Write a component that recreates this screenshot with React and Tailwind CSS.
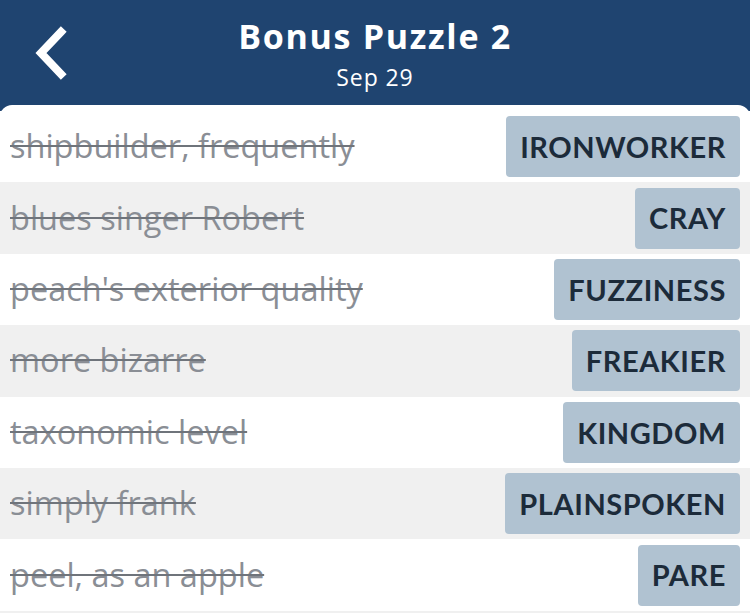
import React from 'react';

const rows = [
  { clue: 'shipbuilder, frequently', answer: 'IRONWORKER' },
  { clue: 'blues singer Robert', answer: 'CRAY' },
  { clue: "peach's exterior quality", answer: 'FUZZINESS' },
  { clue: 'more bizarre', answer: 'FREAKIER' },
  { clue: 'taxonomic level', answer: 'KINGDOM' },
  { clue: 'simply frank', answer: 'PLAINSPOKEN' },
  { clue: 'peel, as an apple', answer: 'PARE' },
];

const BackIcon = () => (
  <svg width="40" height="56" viewBox="0 0 40 56" fill="none">
    <path d="M30 7 L10 28 L30 49" stroke="white" strokeWidth="8" strokeLinecap="square" strokeLinejoin="miter" />
  </svg>
);

const App = () => {
  return (
    <div className="w-[750px] h-[613px] overflow-hidden bg-[#1f4470] font-['Open_Sans',sans-serif]">
      <div className="relative h-[105px] flex flex-col items-center pt-[12px]">
        <button className="absolute left-[31px] top-[25px]">
          <BackIcon />
        </button>
        <h1 className="text-white font-bold text-[34px] leading-[48px] tracking-[0.05em]">Bonus Puzzle 2</h1>
        <p className="text-white text-[23px] leading-[30px] mt-[2px] tracking-[0.04em]">Sep 29</p>
      </div>

      <div className="bg-white rounded-t-[12px] pt-[6px] h-full">
        {rows.map((r, i) => (
          <div
            key={r.clue}
            className={`h-[71.4px] flex items-center justify-between pl-[10px] pr-[10px] ${i % 2 === 1 ? 'bg-[#f0f0f0]' : 'bg-white'}`}
          >
            <span className="text-[32.5px] text-[#8a8e95] line-through decoration-[#6f747b] decoration-2">
              {r.clue}
            </span>
            <span className="h-[61px] flex items-center px-[14px] rounded-[4px] bg-[#b0c2d1] text-[#1c2b3a] font-['Lato',sans-serif] font-bold text-[29px] tracking-[0.02em]">
              {r.answer}
            </span>
          </div>
        ))}
        <div className="h-[10px] bg-[#f0f0f0]" />
      </div>
    </div>
  );
};

export default App;
